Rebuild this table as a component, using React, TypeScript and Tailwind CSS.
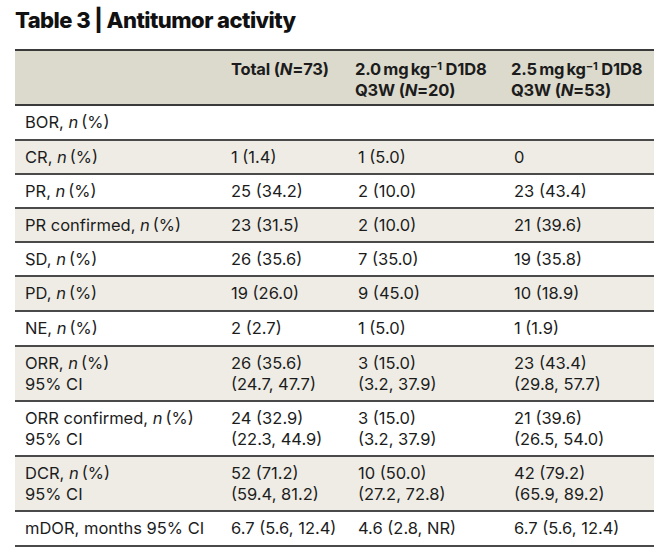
import React from "react";

type Row = { label: React.ReactNode; cols: React.ReactNode[]; h: string; stripe: boolean };

const n = <i>n</i>;
const np = (l: string) => (
  <>
    {l}, {n}&#8201;(%)
  </>
);

const rows: Row[] = [
  { label: np("BOR"), cols: ["", "", ""], h: "h-[35px]", stripe: false },
  { label: np("CR"), cols: ["1 (1.4)", "1 (5.0)", "0"], h: "h-[34px]", stripe: true },
  { label: np("PR"), cols: ["25 (34.2)", "2 (10.0)", "23 (43.4)"], h: "h-[34px]", stripe: false },
  { label: np("PR confirmed"), cols: ["23 (31.5)", "2 (10.0)", "21 (39.6)"], h: "h-[34px]", stripe: true },
  { label: np("SD"), cols: ["26 (35.6)", "7 (35.0)", "19 (35.8)"], h: "h-[34px]", stripe: false },
  { label: np("PD"), cols: ["19 (26.0)", "9 (45.0)", "10 (18.9)"], h: "h-[35px]", stripe: true },
  { label: np("NE"), cols: ["2 (2.7)", "1 (5.0)", "1 (1.9)"], h: "h-[35px]", stripe: false },
  {
    label: (
      <>
        {np("ORR")}
        <br />
        95% CI
      </>
    ),
    cols: [
      <>26 (35.6)<br />(24.7, 47.7)</>,
      <>3 (15.0)<br />(3.2, 37.9)</>,
      <>23 (43.4)<br />(29.8, 57.7)</>,
    ],
    h: "h-[55px]",
    stripe: true,
  },
  {
    label: (
      <>
        {np("ORR confirmed")}
        <br />
        95% CI
      </>
    ),
    cols: [
      <>24 (32.9)<br />(22.3, 44.9)</>,
      <>3 (15.0)<br />(3.2, 37.9)</>,
      <>21 (39.6)<br />(26.5, 54.0)</>,
    ],
    h: "h-[55px]",
    stripe: false,
  },
  {
    label: (
      <>
        {np("DCR")}
        <br />
        95% CI
      </>
    ),
    cols: [
      <>52 (71.2)<br />(59.4, 81.2)</>,
      <>10 (50.0)<br />(27.2, 72.8)</>,
      <>42 (79.2)<br />(65.9, 89.2)</>,
    ],
    h: "h-[55px]",
    stripe: true,
  },
  {
    label: "mDOR, months 95% CI",
    cols: ["6.7 (5.6, 12.4)", "4.6 (2.8, NR)", "6.7 (5.6, 12.4)"],
    h: "h-[35px]",
    stripe: false,
  },
];

const grid = "grid grid-cols-[206px_127px_156px_150px]";

export default function App() {
  return (
    <div
      className="w-[658px] h-[555px] bg-white text-[#1c1c1c] overflow-hidden"
      style={{ fontFamily: "Inter, 'Liberation Sans', sans-serif" }}
    >
      <div className="pl-[15px] pt-[5px] h-[49px]">
        <h1 className="text-[22px] leading-[30px] font-extrabold tracking-[-0.55px] text-[#111]">
          Table 3 | Antitumor activity
        </h1>
      </div>
      <div className="ml-[15px] w-[639px] text-[16.5px] leading-[21px]">
        <div className={`${grid} h-[57px] bg-[#dcdacd] border-t-2 border-b-2 border-[#3a3a3a] font-bold tracking-[-0.2px]`}>
          <div />
          <div className="pl-[10px] pt-[8px]">
            Total (<i>N</i>=73)
          </div>
          <div className="pl-[7px] pt-[8px]">
            2.0&#8201;mg&#8201;kg<sup className="text-[11px]">−1</sup> D1D8
            <br />
            Q3W (<i>N</i>=20)
          </div>
          <div className="pl-[7px] pt-[8px]">
            2.5&#8201;mg&#8201;kg<sup className="text-[11px]">−1</sup> D1D8
            <br />
            Q3W (<i>N</i>=53)
          </div>
        </div>
        {rows.map((r, i) => (
          <div
            key={i}
            className={`${grid} ${r.h} border-b-2 border-[#4a4a4a] ${r.stripe ? "bg-[#eeece5]" : "bg-white"}`}
          >
            <div className="pl-[10px] flex items-center">
              <div>{r.label}</div>
            </div>
            {r.cols.map((c, j) => (
              <div key={j} className="pl-[10px] flex items-center">
                <div>{c}</div>
              </div>
            ))}
          </div>
        ))}
      </div>
    </div>
  );
}
